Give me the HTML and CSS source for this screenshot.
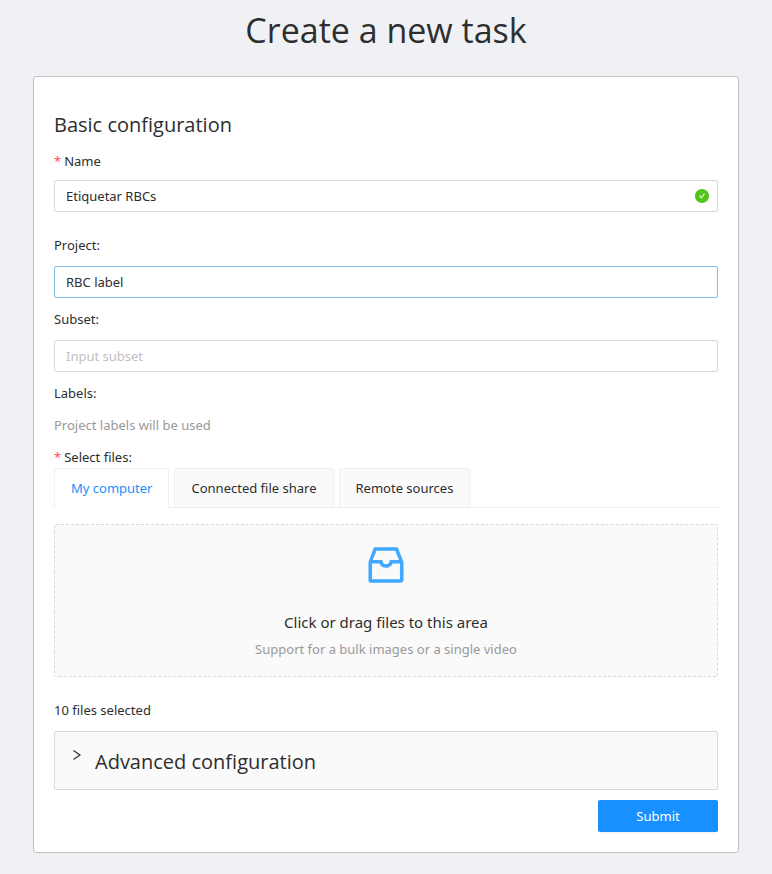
FILE: index.html
```html
<!DOCTYPE html>
<html lang="en">
<head>
<meta charset="utf-8">
<meta name="viewport" content="width=device-width, initial-scale=1">
<title>Create a new task</title>
<link rel="stylesheet" href="styles.css">
</head>
<body>
<main class="page">
  <h1 class="page-title">Create a new task</h1>
  <form class="card">
    <h2 class="section-title">Basic configuration</h2>

    <div class="field field-name">
      <label class="label required" for="name">Name</label>
      <div class="input-wrap">
        <input class="input" id="name" type="text" value="Etiquetar RBCs">
        <svg class="valid-icon" viewBox="64 64 896 896" aria-hidden="true"><path d="M512 64C264.600 64 64 264.600 64 512s200.600 448 448 448 448-200.600 448-448S759.400 64 512 64zm193.500 301.700l-210.600 292a31.800 31.800 0 0 1-51.700 0L318.500 484.900c-3.800-5.300 0-12.700 6.500-12.700h46.900c10.200 0 19.900 4.900 25.900 13.300l71.200 98.800 157.200-218c6-8.300 15.600-13.300 25.900-13.300H699c6.500 0 10.300 7.400 6.500 12.700z"/></svg>
      </div>
    </div>

    <div class="field">
      <label class="label" for="project">Project:</label>
      <input class="input input-active" id="project" type="text" value="RBC label">
    </div>

    <div class="field">
      <label class="label" for="subset">Subset:</label>
      <input class="input" id="subset" type="text" placeholder="Input subset">
    </div>

    <div class="label">Labels:</div>
    <p class="hint">Project labels will be used</p>

    <div class="label required files-label">Select files:</div>
    <div class="tabs" role="tablist">
      <button class="tab tab-active" type="button" role="tab" aria-selected="true">My computer</button>
      <button class="tab" type="button" role="tab" aria-selected="false">Connected file share</button>
      <button class="tab" type="button" role="tab" aria-selected="false">Remote sources</button>
    </div>

    <button class="dropzone" type="button">
      <svg class="inbox-icon" viewBox="0 0 1024 1024" aria-hidden="true"><path d="M885.200 446.300l-.2-.8-112.200-285.100c-5-16.100-19.900-27.200-36.800-27.200H281.200c-17 0-32.100 11.300-36.900 27.600L139.400 443l-.3.700-.2.800c-1.300 4.900-1.700 9.900-1 14.800-.1 1.600-.2 3.200-.2 4.800V830a60.900 60.900 0 0 0 60.800 60.800h627.200c33.500 0 60.800-27.300 60.900-60.800V464.100c0-1.300 0-2.600-.1-3.700.4-4.900 0-9.600-1.300-14.100zm-295.800-43l-.3 15.700c-.8 44.900-31.800 75.100-77.100 75.100-22.100 0-41.100-7.100-54.800-20.600S436 441.200 435.600 419l-.3-15.700H229.500L309 210h399.200l81.700 193.300H589.400zm-375 76.800h157.300c24.300 57.100 76 90.800 140.400 90.800 33.700 0 65-9.400 90.300-27.200 22.200-15.600 39.500-37.400 50.700-63.600h156.500V814H214.400V480.100z"/></svg>
      <span class="drop-title">Click or drag files to this area</span>
      <span class="drop-hint">Support for a bulk images or a single video</span>
    </button>

    <p class="selected-count">10 files selected</p>

    <button class="collapse" type="button" aria-expanded="false">
      <svg class="chevron" viewBox="0 0 12 12" aria-hidden="true"><path d="M2.500 1.500L9 6L2.500 10.500"/></svg>
      <span>Advanced configuration</span>
    </button>

    <div class="actions">
      <button class="submit" type="submit">Submit</button>
    </div>
  </form>
</main>
</body>
</html>
```
FILE: styles.css
```css
* {
  box-sizing: border-box;
}

body {
  margin: 0;
  background: #f0f1f5;
  color: #2e2e2e;
  font-family: "Noto Sans", "Open Sans", sans-serif;
  font-size: 13px;
  line-height: 22px;
}

button,
input {
  font: inherit;
  color: inherit;
}

button {
  cursor: pointer;
}

h1,
h2,
p {
  margin: 0;
  font-weight: 400;
}

.page {
  padding: 6px 33px 20px;
}

.page-title,
.section-title,
.collapse {
  font-family: "Open Sans", "Noto Sans", sans-serif;
}

.page-title {
  margin-bottom: 22px;
  font-size: 34px;
  line-height: 48px;
  text-align: center;
}

.card {
  padding: 34px 20px 20px;
  background: #fff;
  border: 1px solid #c3c3c3;
  border-radius: 3px;
}

.section-title {
  margin-bottom: 11px;
  font-size: 20px;
  line-height: 28px;
}

.field {
  margin-bottom: 10px;
}

.field-name {
  margin-bottom: 22px;
}

.label {
  display: block;
  margin-bottom: 10px;
}

.field-name .label {
  margin-bottom: 8px;
}

.required::before {
  content: "*";
  margin-right: 3px;
  color: #ff4d4f;
}

.input-wrap {
  position: relative;
}

.input {
  display: block;
  width: 100%;
  height: 32px;
  padding: 4px 11px;
  background: #fff;
  border: 1px solid #d9d9d9;
  border-radius: 2px;
  outline: none;
}

.input::placeholder {
  color: #bfbfbf;
  opacity: 1;
}

.input-active {
  border-color: #86bfe9;
}

.valid-icon {
  position: absolute;
  top: 9px;
  right: 9px;
  width: 14px;
  height: 14px;
  background: radial-gradient(#fff 50%, transparent 52%);
  fill: #52c41a;
}

.hint {
  margin-bottom: 10px;
  color: #999;
}

.files-label {
  margin-bottom: 0;
}

.tabs {
  display: flex;
  gap: 5px;
  margin-bottom: 16px;
  box-shadow: inset 0 -1px #f0f0f0;
}

.tab {
  height: 40px;
  padding: 0 16px;
  background: #fafafa;
  border: 1px solid #f0f0f0;
  border-radius: 2px 2px 0 0;
}

.tab-active {
  background: #fff;
  border-bottom-color: #fff;
  color: #1890ff;
}

.dropzone {
  display: flex;
  flex-direction: column;
  align-items: center;
  width: 100%;
  padding: 16px 0;
  background: #fafafa;
  border: 1px dashed #d9d9d9;
  border-radius: 2px;
}

.inbox-icon {
  width: 48px;
  height: 48px;
  margin-bottom: 21px;
  fill: #40a9ff;
}

.drop-title {
  margin-bottom: 4px;
  font-size: 15px;
  line-height: 24px;
}

.drop-hint {
  color: #999;
}

.selected-count {
  margin: 22px 0 10px;
}

.collapse {
  display: flex;
  align-items: flex-start;
  gap: 12px;
  width: 100%;
  padding: 16px 16px 13px;
  background: #fafafa;
  border: 1px solid #d9d9d9;
  border-radius: 2px;
  font-size: 20px;
  line-height: 28px;
}

.chevron {
  width: 12px;
  height: 12px;
  margin-top: 1px;
  fill: none;
  stroke: #2e2e2e;
  stroke-width: 1.2;
}

.actions {
  display: flex;
  justify-content: flex-end;
  margin-top: 10px;
}

.submit {
  width: 120px;
  height: 32px;
  padding: 0;
  background: #1890ff;
  border: 0;
  border-radius: 2px;
  box-shadow: 0 2px 0 rgba(0, 0, 0, 0.04);
  color: #fff;
}
```
